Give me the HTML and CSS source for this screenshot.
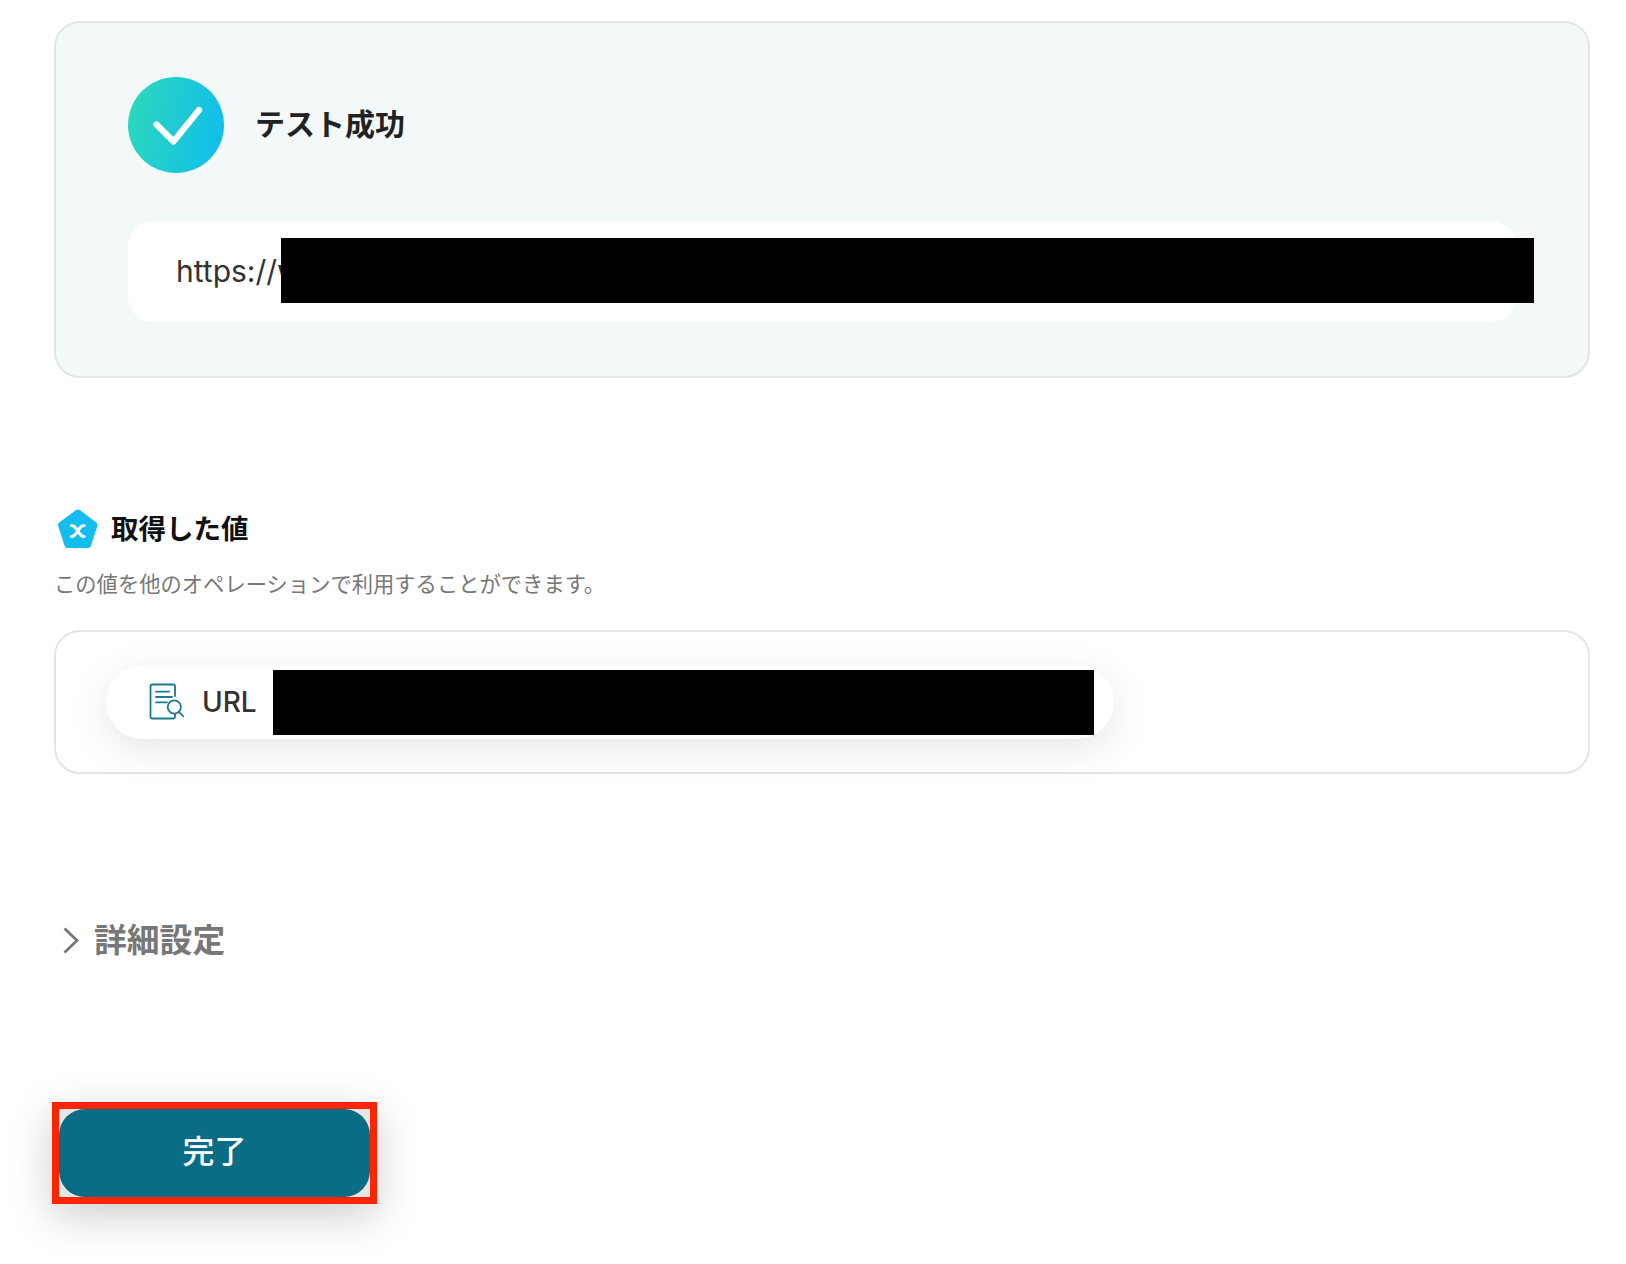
FILE: index.html
```html
<!DOCTYPE html>
<html lang="ja">
<head>
  <meta charset="utf-8">
  <meta name="viewport" content="width=device-width, initial-scale=1.0">
  <title>テスト成功</title>
  <link rel="stylesheet" href="styles.css">
</head>
<body>

  <div class="page">

    <!-- Test result -->
    <section class="result-card">
      <div class="result-head">
        <div class="check-circle">
          <svg width="96" height="96" viewBox="0 0 96 96" fill="none">
            <path d="M28.5 47.5 L45.5 64.5 L71 33" stroke="#fff" stroke-width="6.2" stroke-linecap="round" stroke-linejoin="round"/>
          </svg>
        </div>
        <h2 class="result-title">テスト成功</h2>
      </div>
      <div class="url-box">
        <span class="url-text">https://www.example.com</span>
        <div class="redact redact-url"></div>
      </div>
    </section>

    <!-- Values -->
    <div class="values-head">
      <svg class="pentagon" width="40" height="40" viewBox="0 0 40 40">
        <path d="M20 3.5 L36.5 16 L30 36 L9.5 36 L3 16 Z" fill="#15bcee" stroke="#15bcee" stroke-width="6" stroke-linejoin="round"/>
        <path d="M13.5 16.5 C19.5 16.5 20 27.5 26 27.5 M26 16.5 C20 16.5 19.5 27.5 13.5 27.5" fill="none" stroke="#fff" stroke-width="3.2" stroke-linecap="round"/>
      </svg>
      <h3 class="values-title">取得した値</h3>
    </div>
    <p class="values-desc">この値を他のオペレーションで利用することができます。</p>

    <section class="values-card">
      <div class="value-pill">
        <svg class="doc-icon" width="36" height="38" viewBox="0 0 36 38" fill="none" stroke="#1a7a92" stroke-width="1.8" stroke-linecap="round">
          <path d="M27 13 V3 Q27 1.5 25.5 1.5 H4 Q2.5 1.5 2.5 3 V34 Q2.5 35.5 4 35.5 H25.5 Q27 35.5 27 34 V31"/>
          <path d="M8 8.7 H21 M8 14 H24 M8 19.3 H19"/>
          <circle cx="26.3" cy="24" r="6.6"/>
          <path d="M31 29.2 L35.2 33.2"/>
        </svg>
        <span class="value-name">URL</span>
        <div class="redact redact-value"></div>
      </div>
    </section>

    <!-- Advanced settings -->
    <div class="details-row">
      <svg width="16" height="27" viewBox="0 0 16 27" fill="none">
        <path d="M1.5 1.5 L14 13.5 L1.5 25.5" stroke="#777" stroke-width="2.8"/>
      </svg>
      <span class="details-label">詳細設定</span>
    </div>

    <div class="done-highlight">
      <button class="done-btn">完了</button>
    </div>

  </div>

</body>
</html>
```

FILE: styles.css
```css
* {
  box-sizing: border-box;
  font-family: Inter, 'Noto Sans CJK JP', sans-serif;
}

body {
  margin: 0;
  background: #fff;
}

.page {
  padding: 21px 36px 61px 54px;
}

.result-card {
  background: #f3f9f9;
  border: 2px solid #e4e6e6;
  border-radius: 26px;
  padding: 54px 71px 54px 72px;
}

.result-head {
  display: flex;
  align-items: center;
  gap: 31px;
}

.check-circle {
  width: 96px;
  height: 96px;
  border-radius: 50%;
  background: linear-gradient(100deg, #2dd9b8, #0fbcef);
}

.check-circle svg {
  display: block;
}

.result-title {
  margin: 0 0 6px;
  font-size: 30px;
  font-weight: 700;
  color: #222;
}

.url-box {
  position: relative;
  display: flex;
  align-items: center;
  height: 101px;
  margin-top: 48px;
  padding-left: 48px;
  background: #fff;
  border-radius: 26px;
}

.url-text {
  margin-bottom: 2px;
  font-size: 30px;
  color: #333;
  white-space: nowrap;
}

.redact {
  position: absolute;
  background: #000;
}

.redact-url {
  left: 153px;
  top: 17px;
  width: 1253px;
  height: 65px;
}

.values-head {
  display: flex;
  align-items: center;
  gap: 13px;
  height: 40px;
  margin-top: 131px;
  margin-left: 4px;
}

.pentagon {
  display: block;
}

.values-title {
  margin: 0 0 4px;
  font-size: 27.5px;
  font-weight: 700;
  color: #111;
}

.values-desc {
  margin: 20px 0 31px;
  font-size: 21.3px;
  line-height: 30px;
  color: #777;
}

.values-card {
  height: 144px;
  border: 2px solid #e4e6e6;
  border-radius: 26px;
  padding: 33px 50px;
}

.value-pill {
  position: relative;
  display: flex;
  align-items: center;
  gap: 18px;
  width: 1008px;
  height: 74px;
  padding-left: 42px;
  background: #fff;
  border-radius: 37px;
  box-shadow: 0 10px 40px rgba(0, 0, 0, 0.1);
}

.doc-icon {
  flex: none;
}

.value-name {
  font-size: 28px;
  font-weight: 500;
  color: #333;
}

.redact-value {
  left: 167px;
  top: 5px;
  width: 821px;
  height: 65px;
}

.details-row {
  display: flex;
  align-items: center;
  gap: 15px;
  height: 40px;
  margin-top: 146px;
  margin-left: 9px;
}

.details-label {
  margin-bottom: 6px;
  font-size: 32.8px;
  font-weight: 700;
  color: #777;
}

.done-highlight {
  width: 325px;
  height: 102px;
  margin-top: 142px;
  margin-left: -2px;
  border: 7px solid #fb2600;
  background: #e6e6e6;
  box-shadow: 0 12px 44px rgba(0, 0, 0, 0.2);
}

.done-btn {
  display: block;
  width: 100%;
  height: 100%;
  padding: 0 0 8px;
  border: none;
  border-radius: 26px;
  background: #0a6c85;
  color: #fff;
  font-size: 32px;
  font-weight: 500;
}
```
